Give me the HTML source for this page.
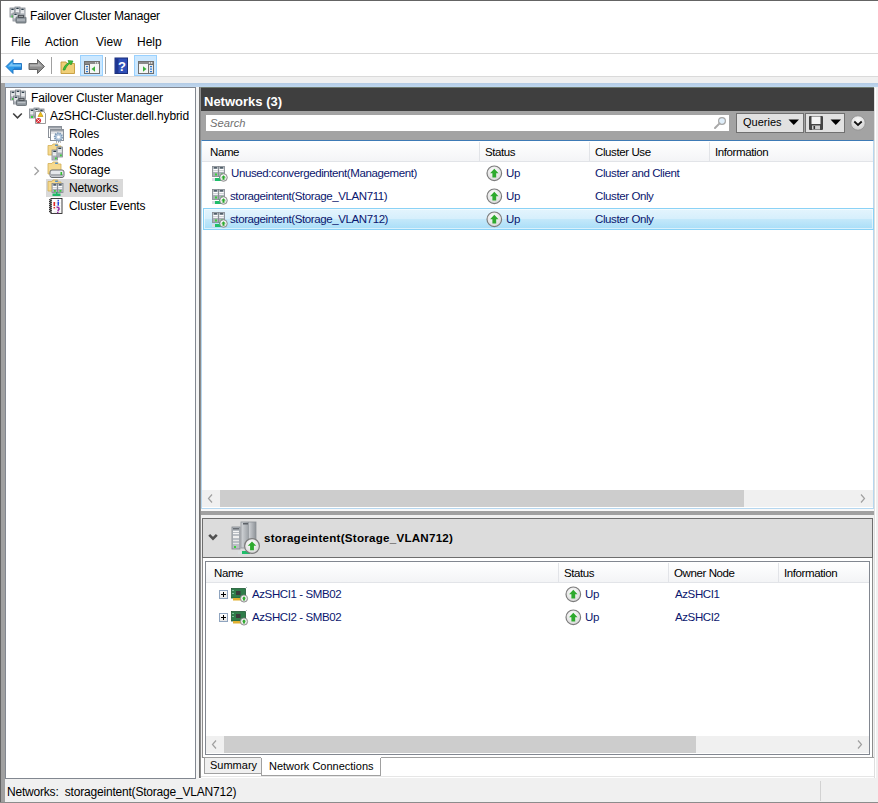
<!DOCTYPE html>
<html><head><meta charset="utf-8">
<style>
*{margin:0;padding:0;box-sizing:border-box}
html,body{width:878px;height:803px;overflow:hidden;background:#fff;font-family:"Liberation Sans",sans-serif;}
.a{position:absolute}
.t{position:absolute;white-space:nowrap;line-height:1;}
.ui{font-size:11.6px;color:#000}
.li{font-size:11px;color:#1c2c8c;letter-spacing:-0.2px}
.hd{font-size:11px;color:#000;letter-spacing:-0.2px}
</style></head><body>
<div class="a" style="left:0;top:0;width:878px;height:803px;background:#fff;overflow:hidden">
<svg width="0" height="0" style="position:absolute"><defs><radialGradient id="ug" cx="0.45" cy="0.35" r="0.7"><stop offset="0" stop-color="#ffffff"/><stop offset="1" stop-color="#d6d6d6"/></radialGradient></defs></svg>

<div class="a" style="left:0px;top:0px;width:878px;height:1px;background:#646464"></div>
<div class="a" style="left:0px;top:0px;width:1px;height:803px;background:#646464"></div>
<svg class="a" style="left:9px;top:6px" width="18" height="18" viewBox="0 0 18 18"><rect x="1" y="2" width="5" height="9" fill="#c4c9ce" stroke="#80868d" stroke-width="0.8"/><rect x="1.5" y="6.95" width="4" height="3.55" fill="#a9afb6"/><rect x="2.2" y="2.7" width="2.6" height="1.2" rx="0.6" fill="#2c3e4a"/><rect x="1.8" y="4.5" width="3.4" height="1" fill="#ffffff"/><rect x="1.8" y="6.3" width="3.4" height="1" fill="#ffffff"/><rect x="6" y="1" width="5" height="9" fill="#c4c9ce" stroke="#80868d" stroke-width="0.8"/><rect x="6.5" y="5.95" width="4" height="3.55" fill="#a9afb6"/><rect x="7.2" y="1.7" width="2.6" height="1.2" rx="0.6" fill="#2c3e4a"/><rect x="6.8" y="3.5" width="3.4" height="1" fill="#ffffff"/><rect x="6.8" y="5.3" width="3.4" height="1" fill="#ffffff"/><rect x="11" y="2" width="5" height="8" fill="#c4c9ce" stroke="#80868d" stroke-width="0.8"/><rect x="11.5" y="6.4" width="4" height="3.1" fill="#a9afb6"/><rect x="12.2" y="2.7" width="2.6" height="1.2" rx="0.6" fill="#2c3e4a"/><rect x="11.8" y="4.5" width="3.4" height="1" fill="#ffffff"/><rect x="11.8" y="6.3" width="3.4" height="1" fill="#ffffff"/><rect x="2.5" y="9.5" width="2" height="2" fill="#3bd13b"/><rect x="4" y="7" width="5" height="8" fill="#c4c9ce" stroke="#80868d" stroke-width="0.8"/><rect x="4.5" y="11.4" width="4" height="3.1" fill="#a9afb6"/><rect x="5.2" y="7.7" width="2.6" height="1.2" rx="0.6" fill="#2c3e4a"/><rect x="4.8" y="9.5" width="3.4" height="1" fill="#ffffff"/><rect x="4.8" y="11.3" width="3.4" height="1" fill="#ffffff"/><rect x="7" y="11" width="10" height="6" rx="0.8" fill="#8d959c" stroke="#5d646b" stroke-width="0.8"/><rect x="9.5" y="9.4" width="5" height="2" fill="none" stroke="#4a4f55" stroke-width="0.9"/><rect x="8" y="13.5" width="8" height="1" fill="#c9ced2"/></svg>
<div class="t" style="left:30px;top:10px;font-size:12px;letter-spacing:-0.2px;color:#000">Failover Cluster Manager</div>
<div class="t" style="left:11px;top:36px;font-size:12px;letter-spacing:0;color:#000">File</div>
<div class="t" style="left:45px;top:36px;font-size:12px;letter-spacing:0;color:#000">Action</div>
<div class="t" style="left:96px;top:36px;font-size:12px;letter-spacing:0;color:#000">View</div>
<div class="t" style="left:137px;top:36px;font-size:12px;letter-spacing:0;color:#000">Help</div>
<div class="a" style="left:1px;top:53px;width:877px;height:1px;background:#d9d9d9"></div>
<svg class="a" style="left:5px;top:58px" width="18" height="17" viewBox="0 0 18 17"><path d="M1 8.5 L8 1.5 L8 5.5 L16.5 5.5 L16.5 11.5 L8 11.5 L8 15.5 Z" fill="#2d9ae8" stroke="#1a6fc0" stroke-width="0.9" stroke-linejoin="round"/><path d="M3 8.5 L7.5 4 L7.5 6.5 L16 6.5 L16 8.5 Z" fill="#8fd0f7" opacity="0.8"/><path d="M9 9.5 L16 9.5 L16 11 L9 11 Z" fill="#1670c8" opacity="0.6"/></svg>
<svg class="a" style="left:28px;top:58px" width="18" height="17" viewBox="0 0 18 17"><path d="M16.5 8.5 L9.5 1.5 L9.5 5.5 L1 5.5 L1 11.5 L9.5 11.5 L9.5 15.5 Z" fill="#8e8e8e" stroke="#5a5a5a" stroke-width="0.9" stroke-linejoin="round"/><path d="M2 6.5 L10 6.5 L10 4 L14.5 8.5 L2 8.5 Z" fill="#bdbdbd" opacity="0.8"/></svg>
<div class="a" style="left:51px;top:57px;width:1px;height:17px;background:#a0a0a0"></div>
<svg class="a" style="left:60px;top:58px" width="16" height="17" viewBox="0 0 16 17"><path d="M1 4 L6 4 L7 5.5 L14.5 5.5 L14.5 15.5 L1 15.5 Z" fill="#f0cf78" stroke="#c49a3a" stroke-width="0.9"/><path d="M3 12 C4 8 6 6 9 4.5 L8 2.5 L13 3 L11 7 L10 5.5 C7.5 7 6 9 5 12 Z" fill="#3cbf3c" stroke="#1f8a1f" stroke-width="0.6"/></svg>
<div class="a" style="left:80px;top:55px;width:23px;height:21px;background:#cce8ff;border:1px solid #99d1ff"></div>
<svg class="a" style="left:84px;top:61px" width="16" height="13" viewBox="0 0 16 13"><rect x="0.5" y="0.5" width="15" height="12" fill="#f5f5f5" stroke="#6f6f6f" stroke-width="1"/><rect x="1" y="1" width="14" height="2" fill="#8a8a8a"/><rect x="11" y="1.3" width="1.2" height="1.2" fill="#fff"/><rect x="13" y="1.3" width="1.2" height="1.2" fill="#fff"/><rect x="0.5" y="3.5" width="5" height="9" fill="#eaeaea" stroke="#6f6f6f" stroke-width="1"/><rect x="2" y="5" width="2" height="1.2" fill="#2a7ad5"/><rect x="2" y="7.5" width="2" height="1.2" fill="#2a7ad5"/><rect x="2" y="10" width="2" height="1.2" fill="#2a7ad5"/><path d="M7.5 8 L11 5.2 L11 10.8 Z" fill="#3ab03a"/></svg>
<div class="a" style="left:105px;top:57px;width:1px;height:17px;background:#a0a0a0"></div>
<svg class="a" style="left:114px;top:57px" width="14" height="17" viewBox="0 0 14 17"><rect x="1" y="1" width="12.5" height="15.5" fill="#2f4fb8" stroke="#1b2f7a" stroke-width="1"/><rect x="1.5" y="1.5" width="3" height="14.5" fill="#1d3590"/><text x="8" y="13.5" font-family="Liberation Sans" font-size="13" font-weight="bold" fill="#fff" text-anchor="middle">?</text></svg>
<div class="a" style="left:134px;top:55px;width:23px;height:21px;background:#cce8ff;border:1px solid #99d1ff"></div>
<svg class="a" style="left:138px;top:61px" width="16" height="13" viewBox="0 0 16 13"><rect x="0.5" y="0.5" width="15" height="12" fill="#f5f5f5" stroke="#6f6f6f" stroke-width="1"/><rect x="1" y="1" width="14" height="2" fill="#8a8a8a"/><rect x="11" y="1.3" width="1.2" height="1.2" fill="#fff"/><rect x="13" y="1.3" width="1.2" height="1.2" fill="#fff"/><rect x="10.5" y="3.5" width="5" height="9" fill="#eaeaea" stroke="#6f6f6f" stroke-width="1"/><rect x="12" y="5" width="2" height="1.2" fill="#2a7ad5"/><rect x="12" y="7.5" width="2" height="1.2" fill="#2a7ad5"/><rect x="12" y="10" width="2" height="1.2" fill="#2a7ad5"/><path d="M8.5 8 L5 5.2 L5 10.8 Z" fill="#3ab03a"/></svg>
<div class="a" style="left:1px;top:76px;width:877px;height:1px;background:#dadada"></div>
<div class="a" style="left:1px;top:77px;width:877px;height:6px;background:#f0f0f0"></div>
<div class="a" style="left:1px;top:83px;width:877px;height:4px;background:linear-gradient(#b3cbe5,#bfd7ef)"></div>
<div class="a" style="left:1px;top:83px;width:4px;height:720px;background:#a0a0a0"></div>
<div class="a" style="left:5px;top:87px;width:191px;height:692px;border:1px solid #828790;background:#fff"></div>
<div class="a" style="left:196px;top:87px;width:3px;height:692px;background:#f4f4f4"></div>
<div class="a" style="left:199px;top:87px;width:1px;height:691px;background:#707070"></div>
<div class="a" style="left:200px;top:87px;width:1px;height:691px;background:#8c8c8c"></div>
<svg class="a" style="left:10px;top:89px" width="17" height="17" viewBox="0 0 17 17"><rect x="0.5" y="2" width="5" height="9" fill="#c4c9ce" stroke="#80868d" stroke-width="0.8"/><rect x="1.0" y="6.95" width="4" height="3.55" fill="#a9afb6"/><rect x="1.7" y="2.7" width="2.6" height="1.2" rx="0.6" fill="#2c3e4a"/><rect x="1.3" y="4.5" width="3.4" height="1" fill="#ffffff"/><rect x="1.3" y="6.3" width="3.4" height="1" fill="#ffffff"/><rect x="5.5" y="1" width="5" height="9" fill="#c4c9ce" stroke="#80868d" stroke-width="0.8"/><rect x="6.0" y="5.95" width="4" height="3.55" fill="#a9afb6"/><rect x="6.7" y="1.7" width="2.6" height="1.2" rx="0.6" fill="#2c3e4a"/><rect x="6.3" y="3.5" width="3.4" height="1" fill="#ffffff"/><rect x="6.3" y="5.3" width="3.4" height="1" fill="#ffffff"/><rect x="10.5" y="2" width="5" height="8" fill="#c4c9ce" stroke="#80868d" stroke-width="0.8"/><rect x="11.0" y="6.4" width="4" height="3.1" fill="#a9afb6"/><rect x="11.7" y="2.7" width="2.6" height="1.2" rx="0.6" fill="#2c3e4a"/><rect x="11.3" y="4.5" width="3.4" height="1" fill="#ffffff"/><rect x="11.3" y="6.3" width="3.4" height="1" fill="#ffffff"/><rect x="2" y="9" width="2" height="2" fill="#3bd13b"/><rect x="3.5" y="7" width="5" height="8" fill="#c4c9ce" stroke="#80868d" stroke-width="0.8"/><rect x="4.0" y="11.4" width="4" height="3.1" fill="#a9afb6"/><rect x="4.7" y="7.7" width="2.6" height="1.2" rx="0.6" fill="#2c3e4a"/><rect x="4.3" y="9.5" width="3.4" height="1" fill="#ffffff"/><rect x="4.3" y="11.3" width="3.4" height="1" fill="#ffffff"/><rect x="6.5" y="11" width="10" height="5.5" rx="0.8" fill="#8d959c" stroke="#5d646b" stroke-width="0.8"/><rect x="9" y="9.4" width="5" height="2" fill="none" stroke="#4a4f55" stroke-width="0.9"/><rect x="7.5" y="13.2" width="8" height="1" fill="#c9ced2"/></svg>
<div class="t" style="left:31px;top:92px;font-size:12px;letter-spacing:-0.12px;color:#000">Failover Cluster Manager</div>
<svg class="a" style="left:12px;top:112px" width="11" height="8" viewBox="0 0 11 8"><path d="M1.2 1.5 L5.5 5.8 L9.8 1.5" fill="none" stroke="#404040" stroke-width="1.6"/></svg>
<svg class="a" style="left:29px;top:107px" width="18" height="18" viewBox="0 0 18 18"><rect x="0.5" y="2" width="5" height="9" fill="#c4c9ce" stroke="#80868d" stroke-width="0.8"/><rect x="1.0" y="6.95" width="4" height="3.55" fill="#a9afb6"/><rect x="1.7" y="2.7" width="2.6" height="1.2" rx="0.6" fill="#2c3e4a"/><rect x="1.3" y="4.5" width="3.4" height="1" fill="#ffffff"/><rect x="1.3" y="6.3" width="3.4" height="1" fill="#ffffff"/><rect x="5" y="1" width="5" height="8" fill="#c4c9ce" stroke="#80868d" stroke-width="0.8"/><rect x="5.5" y="5.4" width="4" height="3.1" fill="#a9afb6"/><rect x="6.2" y="1.7" width="2.6" height="1.2" rx="0.6" fill="#2c3e4a"/><rect x="5.8" y="3.5" width="3.4" height="1" fill="#ffffff"/><rect x="5.8" y="5.3" width="3.4" height="1" fill="#ffffff"/><rect x="10" y="2" width="5" height="7" fill="#c4c9ce" stroke="#80868d" stroke-width="0.8"/><rect x="10.5" y="5.8500000000000005" width="4" height="2.65" fill="#a9afb6"/><rect x="11.2" y="2.7" width="2.6" height="1.2" rx="0.6" fill="#2c3e4a"/><rect x="10.8" y="4.5" width="3.4" height="1" fill="#ffffff"/><rect x="10.8" y="6.3" width="3.4" height="1" fill="#ffffff"/><rect x="2" y="9" width="2" height="2" fill="#3bd13b"/><path d="M6.5 4.5 L14.5 4.5 L16.5 6.5 L16.5 16.5 L6.5 16.5 Z" fill="#fff" stroke="#8f8f8f" stroke-width="0.9"/><path d="M11.5 5 L14 9.5 L9 9.5 Z" fill="#f3c21a" stroke="#b58b00" stroke-width="0.6"/><circle cx="9.5" cy="13.5" r="2.6" fill="#d8303a"/><path d="M8.4 12.4 L10.6 14.6 M10.6 12.4 L8.4 14.6" stroke="#fff" stroke-width="0.9"/></svg>
<div class="t" style="left:50px;top:110px;font-size:12px;letter-spacing:-0.12px;color:#000">AzSHCI-Cluster.dell.hybrid</div>
<svg class="a" style="left:47px;top:125px" width="18" height="18" viewBox="0 0 18 18"><rect x="1.5" y="1.5" width="13" height="11" fill="#fff" stroke="#8a9098" stroke-width="1"/><rect x="2" y="2" width="12" height="1.6" fill="#9aa0a8"/><rect x="3.5" y="4.5" width="13" height="11" fill="#fff" stroke="#8a9098" stroke-width="1"/><rect x="4" y="5" width="12" height="1.6" fill="#9aa0a8"/><rect x="4" y="7.5" width="12" height="1" fill="#c8ccd2"/><circle cx="11.5" cy="12" r="3.8" fill="#b4c8dc" stroke="#7c98b6" stroke-width="1.8" stroke-dasharray="1.4 0.9"/><circle cx="11.5" cy="12" r="1.5" fill="#fff"/><path d="M9.5 16.5 v1 M11.5 16.5 v1 M13.5 16.5 v1" stroke="#555" stroke-width="0.8"/></svg>
<div class="t" style="left:69px;top:128px;font-size:12px;letter-spacing:-0.12px;color:#000">Roles</div>
<svg class="a" style="left:47px;top:143px" width="17" height="18" viewBox="0 0 17 18"><path d="M1 2.5 L5 2.5 L6 1 L10.75 1 L10.75 3 L14 3 L14 12 L1 12 Z" fill="#f6d98e" stroke="#d2ae55" stroke-width="0.8"/><rect x="8.15" y="1.6" width="2.6" height="1.3" fill="#3a86d6"/><rect x="5" y="7" width="5.5" height="10" fill="#c4c9ce" stroke="#80868d" stroke-width="0.8"/><rect x="5.5" y="12.5" width="4.5" height="4.0" fill="#a9afb6"/><rect x="6.2" y="7.7" width="3.1" height="1.2" rx="0.6" fill="#2c3e4a"/><rect x="5.8" y="9.5" width="3.9" height="1" fill="#ffffff"/><rect x="5.8" y="11.3" width="3.9" height="1" fill="#ffffff"/><rect x="10" y="4" width="5.5" height="10" fill="#c4c9ce" stroke="#80868d" stroke-width="0.8"/><rect x="10.5" y="9.5" width="4.5" height="4.0" fill="#a9afb6"/><rect x="11.2" y="4.7" width="3.1" height="1.2" rx="0.6" fill="#2c3e4a"/><rect x="10.8" y="6.5" width="3.9" height="1" fill="#ffffff"/><rect x="10.8" y="8.3" width="3.9" height="1" fill="#ffffff"/><rect x="8" y="14.5" width="1.8" height="1.8" fill="#3bd13b"/><rect x="13" y="11.5" width="1.8" height="1.8" fill="#3bd13b"/></svg>
<div class="t" style="left:69px;top:146px;font-size:12px;letter-spacing:-0.12px;color:#000">Nodes</div>
<svg class="a" style="left:33px;top:166px" width="7" height="10" viewBox="0 0 7 10"><path d="M1.5 1 L5.5 5 L1.5 9" fill="none" stroke="#a0a0a0" stroke-width="1.3"/></svg>
<svg class="a" style="left:47px;top:161px" width="18" height="18" viewBox="0 0 18 18"><path d="M1 2.5 L5 2.5 L6 1 L10.75 1 L10.75 3 L14 3 L14 13 L1 13 Z" fill="#f6d98e" stroke="#d2ae55" stroke-width="0.8"/><rect x="8.15" y="1.6" width="2.6" height="1.3" fill="#3a86d6"/><rect x="3" y="9" width="14" height="7.5" rx="2" fill="#e6e8ec" stroke="#6a6e74" stroke-width="1"/><rect x="4" y="13" width="12" height="2.5" fill="#a9adb3"/><rect x="13.5" y="11" width="1.6" height="3" fill="#2fbf2f"/></svg>
<div class="t" style="left:69px;top:164px;font-size:12px;letter-spacing:-0.12px;color:#000">Storage</div>
<div class="a" style="left:46px;top:179px;width:77px;height:18px;background:#d9d9d9"></div>
<svg class="a" style="left:47px;top:179px" width="18" height="18" viewBox="0 0 18 18"><path d="M1 2.5 L5 2.5 L6 1 L10.75 1 L10.75 3 L14 3 L14 12 L1 12 Z" fill="#f6d98e" stroke="#d2ae55" stroke-width="0.8"/><rect x="8.15" y="1.6" width="2.6" height="1.3" fill="#3a86d6"/><rect x="5" y="4.5" width="5.5" height="9" fill="#c4c9ce" stroke="#80868d" stroke-width="0.8"/><rect x="5.5" y="9.45" width="4.5" height="3.55" fill="#a9afb6"/><rect x="6.2" y="5.2" width="3.1" height="1.2" rx="0.6" fill="#2c3e4a"/><rect x="5.8" y="7.0" width="3.9" height="1" fill="#ffffff"/><rect x="5.8" y="8.8" width="3.9" height="1" fill="#ffffff"/><rect x="10.5" y="4.5" width="5.5" height="9" fill="#c4c9ce" stroke="#80868d" stroke-width="0.8"/><rect x="11.0" y="9.45" width="4.5" height="3.55" fill="#a9afb6"/><rect x="11.7" y="5.2" width="3.1" height="1.2" rx="0.6" fill="#2c3e4a"/><rect x="11.3" y="7.0" width="3.9" height="1" fill="#ffffff"/><rect x="11.3" y="8.8" width="3.9" height="1" fill="#ffffff"/><rect x="7" y="11" width="1.8" height="1.8" fill="#3bd13b"/><rect x="12.5" y="11" width="1.8" height="1.8" fill="#3bd13b"/><rect x="5.5" y="14.5" width="8" height="2.5" fill="#20b868"/><rect x="9" y="13" width="1.5" height="2" fill="#20b868"/></svg>
<div class="t" style="left:69px;top:182px;font-size:12px;letter-spacing:-0.12px;color:#000">Networks</div>
<svg class="a" style="left:47px;top:197px" width="17" height="18" viewBox="0 0 17 18"><rect x="4" y="1.5" width="11" height="15" fill="#fff" stroke="#2a2a2a" stroke-width="0.9"/><path d="M2 2.5 L4.5 3.5 L2 4.5 L4.5 5.5 L2 6.5 L4.5 7.5 L2 8.5 L4.5 9.5 L2 10.5 L4.5 11.5 L2 12.5 L4.5 13.5 L2 14.5 L4.5 15.5" fill="none" stroke="#222" stroke-width="0.9"/><path d="M6.5 6 h7 M6.5 9 h7 M6.5 12 h7 M6.5 15 h7" stroke="#c8c8c8" stroke-width="0.6"/><rect x="6.5" y="5" width="1.6" height="4" fill="#e02828"/><rect x="6.5" y="10" width="1.6" height="1.4" fill="#e02828"/><rect x="10.5" y="2.8" width="1.5" height="1.3" fill="#2848e0"/><rect x="10.5" y="4.6" width="1.5" height="4" fill="#2848e0"/><path d="M9.5 10.3 q3 -0.5 2.5 2 q-0.8 1 -1.2 2" fill="none" stroke="#9a2aa6" stroke-width="1.5"/><rect x="10" y="15" width="1.4" height="1.2" fill="#9a2aa6"/></svg>
<div class="t" style="left:69px;top:200px;font-size:12px;letter-spacing:-0.12px;color:#000">Cluster Events</div>
<div class="a" style="left:201px;top:87px;width:677px;height:692px;background:#f0f0f0"></div>
<div class="a" style="left:201px;top:87px;width:673px;height:1px;background:#6f7a6f"></div>
<div class="a" style="left:201px;top:88px;width:673px;height:23px;background:#3f3f3f"></div>
<div class="t" style="left:204px;top:95px;font-size:13px;font-weight:bold;color:#fff">Networks (3)</div>
<div class="a" style="left:201px;top:111px;width:673px;height:29px;background:#a3a3a3"></div>
<div class="a" style="left:206px;top:115px;width:523px;height:16px;background:#fff"></div>
<div class="t" style="left:210px;top:118px;font-size:11.2px;font-style:italic;color:#707070">Search</div>
<svg class="a" style="left:713px;top:116px" width="14" height="14" viewBox="0 0 14 14"><circle cx="9" cy="5" r="3.4" fill="#dfeefa" stroke="#a6a6a6" stroke-width="1.2"/><path d="M6.6 7.4 L2 12" stroke="#a9a9a9" stroke-width="2" stroke-linecap="round"/></svg>
<div class="a" style="left:736px;top:113px;width:68px;height:20px;background:#e1e1e1;border:1px solid #707070"></div>
<div class="t" style="left:743px;top:117px;font-size:11px;color:#000">Queries</div>
<svg class="a" style="left:788px;top:119px" width="12" height="7" viewBox="0 0 12 7"><path d="M0.5 0.5 L11 0.5 L5.75 6 Z" fill="#000"/></svg>
<div class="a" style="left:805px;top:113px;width:40px;height:20px;background:#e1e1e1;border:1px solid #707070"></div>
<svg class="a" style="left:808px;top:115px" width="16" height="16" viewBox="0 0 16 16"><rect x="1" y="1" width="14" height="14" rx="1" fill="#444"/><rect x="3.5" y="1.5" width="9" height="7.5" fill="#f4f4f4"/><rect x="4" y="10.5" width="8" height="4" fill="#d0d0d0"/><rect x="5.5" y="11" width="1.6" height="3" fill="#333"/></svg>
<svg class="a" style="left:830px;top:119px" width="12" height="7" viewBox="0 0 12 7"><path d="M0.5 0.5 L11 0.5 L5.75 6 Z" fill="#000"/></svg>
<svg class="a" style="left:850px;top:115px" width="16" height="16" viewBox="0 0 16 16"><defs><radialGradient id="cg" cx="0.5" cy="0.3" r="0.7"><stop offset="0" stop-color="#fafafa"/><stop offset="1" stop-color="#cfcfcf"/></radialGradient></defs><circle cx="8" cy="8" r="7.2" fill="url(#cg)" stroke="#8f8f8f" stroke-width="0.8"/><path d="M4.3 6.5 L8 10 L11.7 6.5" fill="none" stroke="#111" stroke-width="1.8"/></svg>
<div class="a" style="left:874px;top:87px;width:4px;height:692px;background:#f0f0f0"></div>
<div class="a" style="left:874px;top:88px;width:1px;height:690px;background:#dedede"></div>
<div class="a" style="left:875px;top:88px;width:1px;height:690px;background:#ffffff"></div>
<div class="a" style="left:201px;top:140px;width:673px;height:369px;border:1px solid #b6d7ef;border-top-color:#3d7ab5;background:#fff"></div>
<div class="a" style="left:202px;top:141px;width:671px;height:21px;background:linear-gradient(#ffffff,#f3f4f6)"></div>
<div class="a" style="left:202px;top:161px;width:671px;height:1px;background:#e2e4e8"></div>
<div class="a" style="left:479px;top:142px;width:1px;height:19px;background:#e2e4e8"></div>
<div class="a" style="left:589px;top:142px;width:1px;height:19px;background:#e2e4e8"></div>
<div class="a" style="left:709px;top:142px;width:1px;height:19px;background:#e2e4e8"></div>
<div class="t" style="left:210px;top:147px;font-size:11.5px;letter-spacing:-0.4px;color:#000">Name</div>
<div class="t" style="left:485px;top:147px;font-size:11.5px;letter-spacing:-0.4px;color:#000">Status</div>
<div class="t" style="left:595px;top:147px;font-size:11.5px;letter-spacing:-0.4px;color:#000">Cluster Use</div>
<div class="t" style="left:715px;top:147px;font-size:11.5px;letter-spacing:-0.4px;color:#000">Information</div>
<div class="a" style="left:203px;top:208px;width:671px;height:22px;background:linear-gradient(#e4f4fd 0%,#d6effc 48%,#c3e8fa 52%,#a9def8 100%);border:1px solid #8ad2f6;box-shadow:inset 0 0 0 1px rgba(255,255,255,0.55)"></div>
<svg class="a" style="left:212px;top:166px" width="16" height="16" viewBox="0 0 16 16"><rect x="0.5" y="0.5" width="6" height="10" fill="#c4c9ce" stroke="#80868d" stroke-width="0.8"/><rect x="1.0" y="6.0" width="5" height="4.0" fill="#a9afb6"/><rect x="1.7" y="1.2" width="3.6" height="1.2" rx="0.6" fill="#2c3e4a"/><rect x="1.3" y="3.0" width="4.4" height="1" fill="#ffffff"/><rect x="1.3" y="4.8" width="4.4" height="1" fill="#ffffff"/><rect x="6.5" y="0.5" width="6" height="10" fill="#c4c9ce" stroke="#80868d" stroke-width="0.8"/><rect x="7.0" y="6.0" width="5" height="4.0" fill="#a9afb6"/><rect x="7.7" y="1.2" width="3.6" height="1.2" rx="0.6" fill="#2c3e4a"/><rect x="7.3" y="3.0" width="4.4" height="1" fill="#ffffff"/><rect x="7.3" y="4.8" width="4.4" height="1" fill="#ffffff"/><rect x="3" y="7.5" width="2" height="2" fill="#3bd13b"/><rect x="9" y="7.5" width="2" height="2" fill="#3bd13b"/><rect x="0" y="12" width="3" height="3" fill="#d8dde2"/><rect x="3" y="12" width="8" height="3" fill="#1fbe6a"/><rect x="7" y="10" width="1.6" height="3" fill="#1fbe6a"/><circle cx="11.5" cy="11.5" r="3.8" fill="url(#ug)" stroke="#7c7c7c" stroke-width="0.8"/><path d="M11.5 9.144 L13.704 11.424 L12.488 11.424 L12.488 13.704 L10.512 13.704 L10.512 11.424 L9.296 11.424 Z" fill="#2eaa2e"/></svg>
<div class="t" style="left:231px;top:168px;font-size:11.5px;letter-spacing:-0.4px;color:#0a166e">Unused:convergedintent(Management)</div>
<svg class="a" style="left:485.7px;top:165px" width="17" height="17" viewBox="0 0 17 17"><circle cx="8.3" cy="8.3" r="7.3" fill="url(#ug)" stroke="#7c7c7c" stroke-width="1.168"/><path d="M8.3 3.774000000000001 L12.534 8.154 L10.198 8.154 L10.198 12.534 L6.402000000000001 12.534 L6.402000000000001 8.154 L4.066000000000001 8.154 Z" fill="#2eaa2e"/></svg>
<div class="t" style="left:506px;top:168px;font-size:11.5px;letter-spacing:-0.4px;color:#0a166e">Up</div>
<div class="t" style="left:595px;top:168px;font-size:11.5px;letter-spacing:-0.4px;color:#0a166e">Cluster and Client</div>
<svg class="a" style="left:212px;top:189px" width="16" height="16" viewBox="0 0 16 16"><rect x="0.5" y="0.5" width="6" height="10" fill="#c4c9ce" stroke="#80868d" stroke-width="0.8"/><rect x="1.0" y="6.0" width="5" height="4.0" fill="#a9afb6"/><rect x="1.7" y="1.2" width="3.6" height="1.2" rx="0.6" fill="#2c3e4a"/><rect x="1.3" y="3.0" width="4.4" height="1" fill="#ffffff"/><rect x="1.3" y="4.8" width="4.4" height="1" fill="#ffffff"/><rect x="6.5" y="0.5" width="6" height="10" fill="#c4c9ce" stroke="#80868d" stroke-width="0.8"/><rect x="7.0" y="6.0" width="5" height="4.0" fill="#a9afb6"/><rect x="7.7" y="1.2" width="3.6" height="1.2" rx="0.6" fill="#2c3e4a"/><rect x="7.3" y="3.0" width="4.4" height="1" fill="#ffffff"/><rect x="7.3" y="4.8" width="4.4" height="1" fill="#ffffff"/><rect x="3" y="7.5" width="2" height="2" fill="#3bd13b"/><rect x="9" y="7.5" width="2" height="2" fill="#3bd13b"/><rect x="0" y="12" width="3" height="3" fill="#d8dde2"/><rect x="3" y="12" width="8" height="3" fill="#1fbe6a"/><rect x="7" y="10" width="1.6" height="3" fill="#1fbe6a"/><circle cx="11.5" cy="11.5" r="3.8" fill="url(#ug)" stroke="#7c7c7c" stroke-width="0.8"/><path d="M11.5 9.144 L13.704 11.424 L12.488 11.424 L12.488 13.704 L10.512 13.704 L10.512 11.424 L9.296 11.424 Z" fill="#2eaa2e"/></svg>
<div class="t" style="left:230px;top:191px;font-size:11.5px;letter-spacing:-0.4px;color:#0a166e">storageintent(Storage_VLAN711)</div>
<svg class="a" style="left:485.7px;top:188px" width="17" height="17" viewBox="0 0 17 17"><circle cx="8.3" cy="8.3" r="7.3" fill="url(#ug)" stroke="#7c7c7c" stroke-width="1.168"/><path d="M8.3 3.774000000000001 L12.534 8.154 L10.198 8.154 L10.198 12.534 L6.402000000000001 12.534 L6.402000000000001 8.154 L4.066000000000001 8.154 Z" fill="#2eaa2e"/></svg>
<div class="t" style="left:506px;top:191px;font-size:11.5px;letter-spacing:-0.4px;color:#0a166e">Up</div>
<div class="t" style="left:595px;top:191px;font-size:11.5px;letter-spacing:-0.4px;color:#0a166e">Cluster Only</div>
<svg class="a" style="left:212px;top:212px" width="16" height="16" viewBox="0 0 16 16"><rect x="0.5" y="0.5" width="6" height="10" fill="#c4c9ce" stroke="#80868d" stroke-width="0.8"/><rect x="1.0" y="6.0" width="5" height="4.0" fill="#a9afb6"/><rect x="1.7" y="1.2" width="3.6" height="1.2" rx="0.6" fill="#2c3e4a"/><rect x="1.3" y="3.0" width="4.4" height="1" fill="#ffffff"/><rect x="1.3" y="4.8" width="4.4" height="1" fill="#ffffff"/><rect x="6.5" y="0.5" width="6" height="10" fill="#c4c9ce" stroke="#80868d" stroke-width="0.8"/><rect x="7.0" y="6.0" width="5" height="4.0" fill="#a9afb6"/><rect x="7.7" y="1.2" width="3.6" height="1.2" rx="0.6" fill="#2c3e4a"/><rect x="7.3" y="3.0" width="4.4" height="1" fill="#ffffff"/><rect x="7.3" y="4.8" width="4.4" height="1" fill="#ffffff"/><rect x="3" y="7.5" width="2" height="2" fill="#3bd13b"/><rect x="9" y="7.5" width="2" height="2" fill="#3bd13b"/><rect x="0" y="12" width="3" height="3" fill="#d8dde2"/><rect x="3" y="12" width="8" height="3" fill="#1fbe6a"/><rect x="7" y="10" width="1.6" height="3" fill="#1fbe6a"/><circle cx="11.5" cy="11.5" r="3.8" fill="url(#ug)" stroke="#7c7c7c" stroke-width="0.8"/><path d="M11.5 9.144 L13.704 11.424 L12.488 11.424 L12.488 13.704 L10.512 13.704 L10.512 11.424 L9.296 11.424 Z" fill="#2eaa2e"/></svg>
<div class="t" style="left:230px;top:214px;font-size:11.5px;letter-spacing:-0.4px;color:#0a166e">storageintent(Storage_VLAN712)</div>
<svg class="a" style="left:485.7px;top:211px" width="17" height="17" viewBox="0 0 17 17"><circle cx="8.3" cy="8.3" r="7.3" fill="url(#ug)" stroke="#7c7c7c" stroke-width="1.168"/><path d="M8.3 3.774000000000001 L12.534 8.154 L10.198 8.154 L10.198 12.534 L6.402000000000001 12.534 L6.402000000000001 8.154 L4.066000000000001 8.154 Z" fill="#2eaa2e"/></svg>
<div class="t" style="left:506px;top:214px;font-size:11.5px;letter-spacing:-0.4px;color:#0a166e">Up</div>
<div class="t" style="left:595px;top:214px;font-size:11.5px;letter-spacing:-0.4px;color:#0a166e">Cluster Only</div>
<div class="a" style="left:202px;top:490px;width:671px;height:17px;background:#f0f0f0"></div>
<div class="a" style="left:220px;top:490px;width:524px;height:17px;background:#cdcdcd"></div>
<svg class="a" style="left:206px;top:493px" width="10" height="11" viewBox="0 0 10 11"><path d="M6 1.5 L2.5 5.5 L6 9.5" fill="none" stroke="#a0a0a0" stroke-width="1.2"/></svg>
<svg class="a" style="left:858px;top:493px" width="10" height="11" viewBox="0 0 10 11"><path d="M3 1.5 L6.5 5.5 L3 9.5" fill="none" stroke="#a0a0a0" stroke-width="1.2"/></svg>
<div class="a" style="left:201px;top:509px;width:673px;height:2px;background:#f8f8f8"></div>
<div class="a" style="left:201px;top:511px;width:673px;height:4px;background:#a0a0a0"></div>
<div class="a" style="left:202px;top:518px;width:671px;height:240px;border:1px solid #8c8c8c;background:#fff"></div>
<div class="a" style="left:202px;top:518px;width:671px;height:40px;border:1px solid #6e6e6e;background:#dcdcdc"></div>
<svg class="a" style="left:207px;top:532px" width="12" height="10" viewBox="0 0 12 10"><path d="M2.2 2.8 L6 6.6 L9.8 2.8" fill="none" stroke="#505050" stroke-width="2.6"/></svg>
<svg class="a" style="left:230px;top:520px" width="32" height="36" viewBox="0 0 32 36"><rect x="2" y="7" width="8" height="22" fill="#b9bec4" stroke="#80868c" stroke-width="0.8"/><rect x="3" y="8" width="6" height="1.5" fill="#6a6f75"/><rect x="3" y="11" width="6" height="1" fill="#f5f5f5"/><rect x="3" y="13" width="6" height="1" fill="#f5f5f5"/><rect x="3" y="16" width="6" height="2" fill="#f0f0f0"/><rect x="3" y="20" width="6" height="1" fill="#e6e6e6"/><rect x="3" y="23" width="6" height="1" fill="#e6e6e6"/><rect x="4" y="26" width="2" height="2" fill="#3bd13b"/><rect x="11" y="2" width="15" height="26" fill="url(#gs)" stroke="#8c9196" stroke-width="0.8"/><defs><linearGradient id="gs" x1="0" x2="1"><stop offset="0" stop-color="#d4d7da"/><stop offset="0.5" stop-color="#9ca1a6"/><stop offset="0.55" stop-color="#c9ccd0"/><stop offset="1" stop-color="#8e9398"/></linearGradient></defs><rect x="13" y="3" width="5" height="1.5" fill="#5d6268"/><rect x="8" y="31" width="5" height="3" fill="#dde1e4"/><rect x="12" y="31" width="8" height="3" fill="#1fbe6a"/><circle cx="22" cy="26" r="7.4" fill="url(#ug)" stroke="#7c7c7c" stroke-width="1.1840000000000002"/><path d="M22 21.412 L26.292 25.852 L23.924 25.852 L23.924 30.292 L20.076 30.292 L20.076 25.852 L17.708 25.852 Z" fill="#2eaa2e"/></svg>
<div class="t" style="left:264px;top:532px;font-size:11.6px;font-weight:bold;color:#000;letter-spacing:0.25px">storageintent(Storage_VLAN712)</div>
<div class="a" style="left:205px;top:561px;width:665px;height:194px;border:1px solid #828790;background:#fff"></div>
<div class="a" style="left:206px;top:562px;width:663px;height:20px;background:linear-gradient(#ffffff,#f3f4f6)"></div>
<div class="a" style="left:206px;top:582px;width:663px;height:1px;background:#e2e4e8"></div>
<div class="a" style="left:558px;top:563px;width:1px;height:19px;background:#e2e4e8"></div>
<div class="a" style="left:668px;top:563px;width:1px;height:19px;background:#e2e4e8"></div>
<div class="a" style="left:778px;top:563px;width:1px;height:19px;background:#e2e4e8"></div>
<div class="t" style="left:214px;top:568px;font-size:11.5px;letter-spacing:-0.4px;color:#000">Name</div>
<div class="t" style="left:564px;top:568px;font-size:11.5px;letter-spacing:-0.4px;color:#000">Status</div>
<div class="t" style="left:674px;top:568px;font-size:11.5px;letter-spacing:-0.4px;color:#000">Owner Node</div>
<div class="t" style="left:784px;top:568px;font-size:11.5px;letter-spacing:-0.4px;color:#000">Information</div>
<div class="a" style="left:219px;top:590px;width:9px;height:9px;background:linear-gradient(#fdfdfd,#e6e6e6);border:1px solid #8fa4bf"></div>
<svg class="a" style="left:219px;top:590px" width="9" height="9" viewBox="0 0 9 9"><path d="M2 4.5 h5 M4.5 2 v5" stroke="#000" stroke-width="1"/></svg>
<svg class="a" style="left:231px;top:587px" width="18" height="16" viewBox="0 0 18 16"><rect x="0.5" y="1.5" width="14" height="9.5" fill="#2f7d4a" stroke="#1f5a33" stroke-width="0.8"/><rect x="5" y="4" width="4.5" height="4" fill="#3b3b3b"/><rect x="1.5" y="3" width="1" height="1" fill="#cfe"/><rect x="1.5" y="6" width="1" height="1" fill="#cfe"/><rect x="2" y="11" width="8" height="2.5" fill="#e0b030"/><path d="M14.5 1.5 L16 0" stroke="#9aa" stroke-width="0.8"/><circle cx="13" cy="11.5" r="3.6" fill="url(#ug)" stroke="#7c7c7c" stroke-width="0.8"/><path d="M13 9.268 L15.088000000000001 11.428 L13.936 11.428 L13.936 13.588000000000001 L12.064 13.588000000000001 L12.064 11.428 L10.911999999999999 11.428 Z" fill="#2eaa2e"/></svg>
<div class="t" style="left:252px;top:589px;font-size:11.5px;letter-spacing:-0.4px;color:#0a166e">AzSHCI1 - SMB02</div>
<svg class="a" style="left:564.7px;top:586px" width="17" height="17" viewBox="0 0 17 17"><circle cx="8.3" cy="8.3" r="7.3" fill="url(#ug)" stroke="#7c7c7c" stroke-width="1.168"/><path d="M8.3 3.774000000000001 L12.534 8.154 L10.198 8.154 L10.198 12.534 L6.402000000000001 12.534 L6.402000000000001 8.154 L4.066000000000001 8.154 Z" fill="#2eaa2e"/></svg>
<div class="t" style="left:585px;top:589px;font-size:11.5px;letter-spacing:-0.4px;color:#0a166e">Up</div>
<div class="t" style="left:675px;top:589px;font-size:11.5px;letter-spacing:-0.4px;color:#0a166e">AzSHCI1</div>
<div class="a" style="left:219px;top:613px;width:9px;height:9px;background:linear-gradient(#fdfdfd,#e6e6e6);border:1px solid #8fa4bf"></div>
<svg class="a" style="left:219px;top:613px" width="9" height="9" viewBox="0 0 9 9"><path d="M2 4.5 h5 M4.5 2 v5" stroke="#000" stroke-width="1"/></svg>
<svg class="a" style="left:231px;top:610px" width="18" height="16" viewBox="0 0 18 16"><rect x="0.5" y="1.5" width="14" height="9.5" fill="#2f7d4a" stroke="#1f5a33" stroke-width="0.8"/><rect x="5" y="4" width="4.5" height="4" fill="#3b3b3b"/><rect x="1.5" y="3" width="1" height="1" fill="#cfe"/><rect x="1.5" y="6" width="1" height="1" fill="#cfe"/><rect x="2" y="11" width="8" height="2.5" fill="#e0b030"/><path d="M14.5 1.5 L16 0" stroke="#9aa" stroke-width="0.8"/><circle cx="13" cy="11.5" r="3.6" fill="url(#ug)" stroke="#7c7c7c" stroke-width="0.8"/><path d="M13 9.268 L15.088000000000001 11.428 L13.936 11.428 L13.936 13.588000000000001 L12.064 13.588000000000001 L12.064 11.428 L10.911999999999999 11.428 Z" fill="#2eaa2e"/></svg>
<div class="t" style="left:252px;top:612px;font-size:11.5px;letter-spacing:-0.4px;color:#0a166e">AzSHCI2 - SMB02</div>
<svg class="a" style="left:564.7px;top:609px" width="17" height="17" viewBox="0 0 17 17"><circle cx="8.3" cy="8.3" r="7.3" fill="url(#ug)" stroke="#7c7c7c" stroke-width="1.168"/><path d="M8.3 3.774000000000001 L12.534 8.154 L10.198 8.154 L10.198 12.534 L6.402000000000001 12.534 L6.402000000000001 8.154 L4.066000000000001 8.154 Z" fill="#2eaa2e"/></svg>
<div class="t" style="left:585px;top:612px;font-size:11.5px;letter-spacing:-0.4px;color:#0a166e">Up</div>
<div class="t" style="left:675px;top:612px;font-size:11.5px;letter-spacing:-0.4px;color:#0a166e">AzSHCI2</div>
<div class="a" style="left:206px;top:736px;width:663px;height:17px;background:#f0f0f0"></div>
<div class="a" style="left:224px;top:736px;width:472px;height:17px;background:#cdcdcd"></div>
<svg class="a" style="left:210px;top:739px" width="10" height="11" viewBox="0 0 10 11"><path d="M6 1.5 L2.5 5.5 L6 9.5" fill="none" stroke="#a0a0a0" stroke-width="1.2"/></svg>
<svg class="a" style="left:855px;top:739px" width="10" height="11" viewBox="0 0 10 11"><path d="M3 1.5 L6.5 5.5 L3 9.5" fill="none" stroke="#a0a0a0" stroke-width="1.2"/></svg>
<div class="a" style="left:201px;top:758px;width:673px;height:20px;background:#fff"></div>
<div class="a" style="left:380px;top:757px;width:494px;height:1px;background:#a0a0a0"></div>
<div class="a" style="left:201px;top:776px;width:673px;height:1px;background:#e6e6e6"></div>
<div class="a" style="left:204px;top:757px;width:58px;height:17px;background:#f0f0f0;border:1px solid #a0a0a0"></div>
<div class="t" style="left:210px;top:760px;font-size:11px;color:#000">Summary</div>
<div class="a" style="left:261px;top:757px;width:120px;height:19px;background:#fff;border:1px solid #a0a0a0;border-top:none"></div>
<div class="a" style="left:261px;top:757px;width:120px;height:1px;background:#fff"></div>
<div class="t" style="left:269px;top:761px;font-size:11px;color:#000">Network Connections</div>
<div class="a" style="left:5px;top:779px;width:873px;height:23px;background:#f0f0f0"></div>
<div class="a" style="left:820px;top:781px;width:1px;height:20px;background:#d2d2d2"></div>
<div class="a" style="left:0px;top:802px;width:878px;height:1px;background:#8c8c8c"></div>
<div class="t" style="left:7px;top:786px;font-size:12px;letter-spacing:-0.2px;color:#000">Networks:&nbsp; storageintent(Storage_VLAN712)</div>
</div></body></html>
